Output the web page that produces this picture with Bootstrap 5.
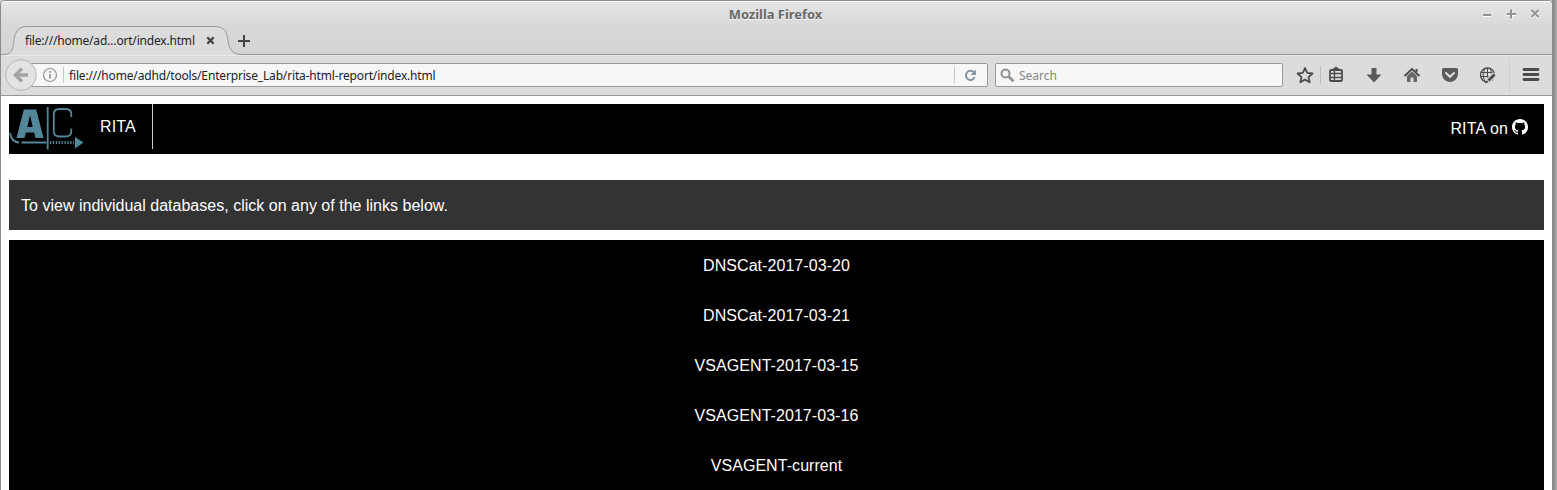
<!DOCTYPE html>
<html lang="en">
<head>
<meta charset="utf-8">
<title>RITA</title>
<link href="https://cdn.jsdelivr.net/npm/bootstrap@5.3.0/dist/css/bootstrap.min.css" rel="stylesheet">
<style>
html,body{height:100%;overflow:hidden}
body{background:linear-gradient(90deg,#ccc 0,#ccc 1552px,#828282 1552px,#999 1555px,#b4b4b4 1557px);font-family:"Noto Sans",sans-serif;font-size:12px;color:#222}
svg{display:block;flex:none}
.window-frame{width:1553px;height:490px;border:solid #8c8c8c;border-width:1px 1px 0;border-radius:5px 5px 0 0;background:#fff;overflow:hidden}
.title-area{height:25px;background:linear-gradient(#e6e6e6,#d8d8d8);box-shadow:inset 0 1px #fff;padding-right:10px}
.title-text{font-size:12.900px;font-weight:700;color:#686868;text-shadow:0 1px #f4f4f4;padding-top:3px;padding-left:14px}
.tab-row{height:29px;background:linear-gradient(#d8d8d8,#d4d4d4);box-shadow:inset 0 -1px #979797}
.tab-box{width:243px;height:29px}
.tab-label{padding:1px 0 0 24px;letter-spacing:-.19px}
.tool-row{height:41px;background:#dcdcdc;border-bottom:1px solid #979797;box-shadow:inset 0 1px #e9e9e9;padding-left:4px}
.url-box{flex:none;width:957px;height:24px;margin-left:-6px;background:#f7f7f7;border:1px solid #999;border-radius:0 2px 2px 0}
.url-box svg:first-child{margin-left:10px}
.url-text{letter-spacing:-.166px;padding-top:1px}
.back-btn{width:32px;height:32px;position:relative;z-index:1;flex:none}
.search-box{flex:none;width:288px;height:24px;margin-left:7px;background:#f7f7f7;border:1px solid #999;border-radius:2px;color:#858585}
.search-box span{padding-top:1px}
.thin-sep{width:1px;height:16px;background:#c6c6c6;flex:none}
.rita-page{padding:8px 8px 0;font-family:"Liberation Sans",Arial,sans-serif;font-size:16px;letter-spacing:.015px;color:#fff}
.rita-nav{height:50px;background:#000}
.rita-brand{height:45px;width:144px;border-right:1px solid #ccc}
.rita-msg{height:50px;margin-top:26px;background:#333;padding:2px 0 0 12px}
.rita-list{margin-top:10px;background:#000}
.rita-list li{height:50px;line-height:52px;letter-spacing:.06px}
.rita-page a{color:#fff;text-decoration:none}
.rita-nav a{letter-spacing:.14px}
</style>
</head>
<body>
<div class="window-frame">
  <header>
    <div class="title-area d-flex align-items-center">
      <div class="title-text flex-grow-1 text-center ps-5" style="margin-left:20px">Mozilla Firefox</div>
      <svg width="60" height="16" viewBox="1482 6 60 16" fill="none" stroke="#fff" stroke-width="2"><path d="M1483 16h8M1507 15h9M1511.5 10.500v9M1531.500 11l7 7m0-7l-7 7"/><path stroke="#929292" d="M1483 15h8M1507 14h9M1511 9.500v9M1531.500 10l7 7m0-7l-7 7"/></svg>
    </div>
    <div class="tab-row d-flex">
      <div class="tab-box position-relative">
        <svg class="position-absolute top-0 start-0" width="243" height="29" viewBox="1 26 243 29"><path d="M1 54.500H4C16 54.500 12 41 16 33Q19 26.500 26 26.500H215C230 26.500 226 40 230 48Q233 54.500 241 54.500V56H1Z" fill="#dcdcdc"/><path d="M1 54.500H4C16 54.500 12 41 16 33Q19 26.500 26 26.500H215C230 26.500 226 40 230 48Q233 54.500 241 54.500" fill="none" stroke="#979797"/></svg>
        <div class="position-relative d-flex align-items-center h-100">
          <span class="tab-label text-nowrap">file:///home/ad…ort/index.html</span>
          <svg class="position-absolute" style="left:205px;top:10px" width="9" height="9" viewBox="0 0 9 9"><path d="M1.300 1.300l6.400 6.400m0-6.400l-6.400 6.400" stroke="#444" stroke-width="2.300"/></svg>
          <svg class="position-absolute" style="left:237px;top:9px" width="12" height="12" viewBox="0 0 12 12"><path d="M0 6h12M6 0v12" stroke="#444" stroke-width="2"/></svg>
        </div>
      </div>
    </div>
    <div class="tool-row d-flex align-items-center">
      <div class="back-btn"><svg width="32" height="32" viewBox="0 0 32 32"><circle cx="16" cy="16" r="15.300" fill="#e3e3e3" stroke="#b4b4b4"/><path d="M23 16H11M17 9.500L10.500 16l6.500 6.500" fill="none" stroke="#a4a4a4" stroke-width="3.500"/></svg></div>
      <div class="url-box d-flex align-items-center">
        <svg width="16" height="16" viewBox="0 0 16 16"><circle cx="8" cy="8" r="6.500" fill="none" stroke="#949494" stroke-width="1.200"/><path d="M8 7v4.500M8 4v1.700" stroke="#8d8d8d" stroke-width="1.600"/></svg>
        <span class="thin-sep" style="margin-left:5px"></span>
        <span class="url-text" style="margin-left:5px">file:///home/adhd/tools/Enterprise_Lab/rita-html-report/index.html</span>
        <span class="thin-sep ms-auto"></span>
        <svg style="margin:0 10px 0 9px" width="13" height="13" viewBox="0 0 13 13"><path d="M10.700 8.200A4.600 4.600 0 1 1 9.800 3.200" fill="none" stroke="#8495a3" stroke-width="2"/><path d="M12 .5v5.500H6.500Z" fill="#8495a3"/></svg>
      </div>
      <div class="search-box d-flex align-items-center">
        <svg class="ms-1" width="15" height="15" viewBox="0 0 15 15" fill="none" stroke="#929292"><circle cx="5.500" cy="5.500" r="4" stroke-width="2"/><path d="M8.500 8.500l5 4.800" stroke-width="2.700"/></svg>
        <span class="ms-1">Search</span>
      </div>
      <svg width="268" height="40" viewBox="1283 55 268 40" fill="none" stroke="#4c4c4c">
        <path d="M1305 68l2.200 4.900 5.300.6-4 3.600 1.200 5.200-4.700-2.700-4.700 2.700 1.200-5.200-4-3.600 5.300-.6z" stroke-width="1.800" stroke-linejoin="round"/>
        <path d="M1320.500 66v18" stroke="#bdbdbd"/>
        <rect x="1330" y="70" width="12" height="11" rx="1" stroke-width="1.800"/><path d="M1332.500 69.500l3.500-2.500 3.500 2.500z" fill="#4c4c4c"/><path d="M1334.500 71v10M1331 73.500h10M1331 77.500h10" stroke-width="1.300"/>
        <path d="M1371.500 68h5v6.500h5l-7.500 8-7.500-8h5z" fill="#5a5a5a" stroke="none"/>
        <path d="M1404.500 76l7.500-7 7.500 7" stroke-width="2"/><path d="M1407 76l5-4.500 5 4.500v6h-3.500v-4.500h-3V82h-3.500z" fill="#666" stroke="none"/><path d="M1416.500 69v3" stroke-width="2"/>
        <path d="M1443.500 68h13q1.500 0 1.500 1.500v4c0 4.500-3.500 8.500-8 8.500s-8-4-8-8.500v-4q0-1.500 1.500-1.500z" fill="#5a5a5a" stroke="none"/><path d="M1446 73l4 3.800 4-3.800" stroke="#e0e0e0" stroke-width="2" stroke-linecap="round"/>
        <circle cx="1487.500" cy="75" r="7" stroke-width="1.300"/><path d="M1481 72.500h13M1480.500 76.500h13M1487.500 68v14M1484.500 69q-3 6 0 12M1490.500 69q3 6 0 12" stroke-width="1"/><path d="M1487 82l8-8" stroke="#dcdcdc" stroke-width="5.500"/><path d="M1488.500 80.500l6-6" stroke-width="3"/><path d="M1485 83.500l1.500-3.500 2 2z" fill="#4c4c4c" stroke="none"/>
        <path d="M1509.500 58v34" stroke="#cecece"/>
        <path d="M1524 69.500h14M1524 74.500h14M1524 79.500h14" stroke-width="2.800" stroke-linecap="round"/>
      </svg>
    </div>
  </header>
  <main class="rita-page">
    <nav class="rita-nav d-flex justify-content-between">
      <div class="rita-brand d-flex align-items-center">
        <svg width="76" height="46" viewBox="9 104 76 46" fill="none" stroke="#528799"><path fill="#528799" stroke="none" fill-rule="evenodd" d="M23.800 109.500h12.400l7.300 28.500h-8l-1.300-5.500h-8.400L24.500 138H16.500zM27.300 127h5.400L30 115z"/><path d="M47.700 107v42.500" stroke-width="1.800"/><path d="M71.300 117v-2.500q0-5.500-5.500-5.500h-6.500q-5.500 0-5.500 5.500v16.500q0 5.500 5.500 5.500h6.500q5.500 0 5.500-5.500v-2.500" stroke-width="1.800"/><path d="M10 133q1.500 9 9 9.500M21.500 142.500H46.500" stroke-width="1.800"/><path d="M50 142.500H74" stroke-width="3" stroke-dasharray="1.300 1.600"/><path d="M75 137l8.500 5.500-8.500 6z" fill="#528799" stroke="none"/></svg>
        <a href="#" style="margin-left:15px">RITA</a>
      </div>
      <a href="#" class="d-flex align-items-center me-3 gap-1">RITA on
        <svg class="mb-1" width="16" height="16" viewBox="0 0 16 16" fill="#fff"><path d="M8 0C3.580 0 0 3.580 0 8c0 3.540 2.290 6.530 5.470 7.590.4.070.55-.17.55-.38 0-.19-.01-.82-.01-1.490-2.010.37-2.530-.49-2.690-.94-.09-.23-.48-.94-.82-1.130-.28-.15-.68-.52-.01-.53.63-.01 1.080.58 1.230.82.72 1.210 1.870.87 2.330.66.070-.52.28-.87.51-1.070-1.780-.2-3.640-.89-3.640-3.950 0-.87.31-1.590.82-2.150-.08-.2-.36-1.020.08-2.120 0 0 .67-.21 2.200.82a7.420 7.420 0 0 1 4 0c1.530-1.040 2.200-.82 2.200-.82.44 1.100.16 1.920.08 2.120.51.56.82 1.270.82 2.150 0 3.070-1.870 3.750-3.650 3.950.29.25.54.73.54 1.480 0 1.070-.01 1.930-.01 2.200 0 .21.15.46.55.38A8.010 8.010 0 0 0 16 8c0-4.420-3.580-8-8-8z"/></svg>
      </a>
    </nav>
    <div class="rita-msg d-flex align-items-center">To view individual databases, click on any of the links below.</div>
    <ul class="rita-list list-unstyled text-center mb-0">
      <li><a href="#">DNSCat-2017-03-20</a></li>
      <li><a href="#">DNSCat-2017-03-21</a></li>
      <li><a href="#">VSAGENT-2017-03-15</a></li>
      <li><a href="#">VSAGENT-2017-03-16</a></li>
      <li><a href="#">VSAGENT-current</a></li>
    </ul>
  </main>
</div>
<script src="https://cdn.jsdelivr.net/npm/bootstrap@5.3.0/dist/js/bootstrap.bundle.min.js"></script>
</body>
</html>
